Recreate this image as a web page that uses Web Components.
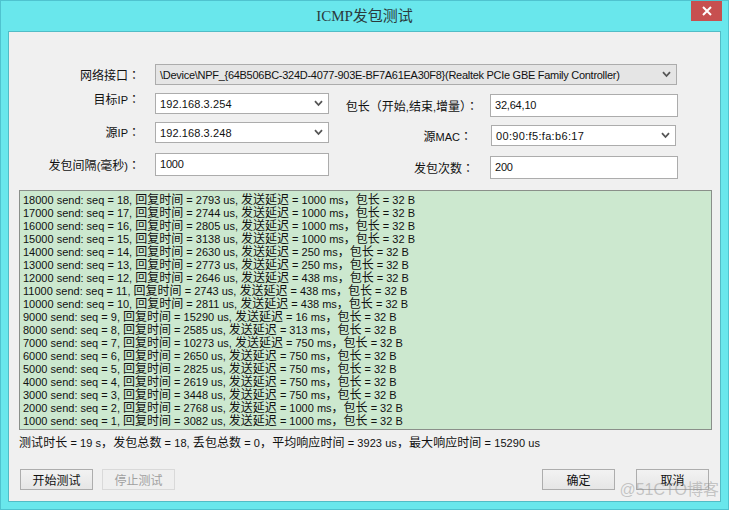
<!DOCTYPE html>
<html><head><meta charset="utf-8"><style>html,body{margin:0;padding:0;background:#69e7ec}</style></head><body>
<icmp-window>
  <icmp-form></icmp-form>
  <icmp-log></icmp-log>
  <icmp-summary></icmp-summary>
  <icmp-actions></icmp-actions>
</icmp-window>
<script>
const FONT = '"Liberation Sans","Noto Sans CJK SC",sans-serif';
const CJK_CSS = `.c{font-family:"Noto Sans CJK SC",sans-serif;font-size:12px}.k{font-family:"Noto Sans CJK TC",sans-serif;font-size:12px}`;
const wrap = s => s.replace(/[\u3000-\u9fff\uff00-\uffef]+/g, m => `<span class="c">${m}</span>`);
const wrapLabel = s => wrap(s.replace(/：$/,'')) + (s.endsWith('：') ? '<span class="k">：</span>' : '');

class IcmpWindow extends HTMLElement{
  constructor(){super();this.attachShadow({mode:'open'}).innerHTML=`<style>
  :host{display:flex;flex-direction:column;width:729px;height:510px;box-sizing:border-box;background:#69e7ec;border:1px solid #4fc3cf;font-family:${FONT};position:relative;overflow:hidden}
  .bar{height:30px;flex:none;display:flex;justify-content:center;align-items:center;font:15px "Liberation Serif","Noto Sans CJK SC",serif;color:#2b3a3c;padding-bottom:4px;box-sizing:border-box}
  .close{position:absolute;top:0;right:6px;width:31px;height:20px;background:#c75050;display:flex;align-items:center;justify-content:center}
  .client{flex:1;margin:0 7px 7px 7px;background:#f0f0f0;border:1px solid #52bcc6;display:flex;flex-direction:column;padding:32px 9px 0 10px;box-sizing:border-box;min-height:0}
  .mark{position:absolute;right:9px;bottom:9px;font:16px "Liberation Sans","Noto Sans CJK SC",sans-serif;color:rgba(140,140,140,.45)}
  </style>
  <div class="bar">ICMP发包测试</div>
  <div class="close"><svg width="10" height="10" viewBox="0 0 10 10"><path d="M1 1L9 9M9 1L1 9" stroke="#fff" stroke-width="2"/></svg></div>
  <div class="client"><slot></slot></div>
  <div class="mark">@51CTO博客</div>`;}
}
class IcmpField extends HTMLElement{
  constructor(){super();const w=this.getAttribute('lw'),g=this.getAttribute('gap'),up=this.getAttribute('up')||0,cw=this.getAttribute('cw'),h=this.getAttribute('h');
  this.attachShadow({mode:'open'}).innerHTML=`<style>
  :host{display:flex;align-items:center;height:${h}px;color:#111;font-size:11px}
  label{width:${w}px;margin-right:${g}px;text-align:right;white-space:nowrap;flex:none;padding-bottom:${up}px;box-sizing:border-box;display:flex;justify-content:flex-end;align-items:baseline;white-space:pre}
  .ctl{width:${cw}px;flex:none;display:flex}
  ${CJK_CSS}
  </style><label><span>${wrapLabel(this.getAttribute('label'))}</span></label><div class="ctl"><slot></slot></div>`;}
}
class IcmpSelect extends HTMLElement{
  constructor(){super();const d=this.hasAttribute('disabled');
  this.attachShadow({mode:'open'}).innerHTML=`<style>
  :host{display:flex;flex:1;align-items:center;justify-content:space-between;height:21px;box-sizing:border-box;border:1px solid #acacac;background:${d?'#e5e5e5':'#fff'};padding:0 5px 0 4px;font-size:11px;color:#111;white-space:nowrap;letter-spacing:${this.getAttribute('ls')||0}px}
  svg{flex:none}
  </style><span><slot></slot></span><svg width="9" height="7" viewBox="0 0 9 7"><path d="M1 1.2L4.5 5L8 1.2" fill="none" stroke="#555" stroke-width="1.8"/></svg>`;}
}
class IcmpInput extends HTMLElement{
  constructor(){super();this.attachShadow({mode:'open'}).innerHTML=`<style>
  :host{display:flex;flex:1;align-items:center;height:23px;box-sizing:border-box;border:1px solid #acacac;background:#fff;padding:0 0 2px 4px;font-size:11px;color:#111;letter-spacing:-.2px}
  </style><slot></slot>`;}
}
class IcmpButton extends HTMLElement{
  constructor(){super();const d=this.hasAttribute('disabled');
  this.attachShadow({mode:'open'}).innerHTML=`<style>
  :host{display:flex;align-items:center;justify-content:center;width:73px;height:21px;box-sizing:border-box;border:1px solid ${d?'#d9d9d9':'#adadad'};background:${d?'#efefef':'linear-gradient(#f2f2f2,#e6e6e6)'};color:${d?'#a0a0a0':'#111'};font:12px "Noto Sans CJK SC",sans-serif}
  </style><slot></slot>`;}
}
class IcmpForm extends HTMLElement{
  constructor(){super();this.attachShadow({mode:'open'}).innerHTML=`<style>
  :host{display:flex;flex-direction:column;flex:none;height:126px}
  .cols{display:flex;margin-top:8px}
  .col{display:flex;flex-direction:column}
  .l{width:320px}
  .l icmp-field:nth-child(2){margin-top:8px}
  .l icmp-field:nth-child(3){margin-top:10px}
  .r{margin-top:1px}
  .r icmp-field:nth-child(2){margin-top:8px}
  .r icmp-field:nth-child(3){margin-top:10px}
  </style>
  <icmp-field label="网络接口：" h="21" lw="121" gap="15" cw="522"><icmp-select disabled ls="-.28">\\Device\\NPF_{64B506BC-324D-4077-903E-BF7A61EA30F8}(Realtek PCIe GBE Family Controller)</icmp-select></icmp-field>
  <div class="cols">
    <div class="col l">
      <icmp-field label="目标IP：" h="21" lw="121" gap="15" up="10" cw="174"><icmp-select ls=".1">192.168.3.254</icmp-select></icmp-field>
      <icmp-field label="源IP：" h="21" lw="121" gap="15" up="2" cw="174"><icmp-select ls=".1">192.168.3.248</icmp-select></icmp-field>
      <icmp-field label="发包间隔(毫秒)：" h="23" lw="121" gap="15" cw="174"><icmp-input>1000</icmp-input></icmp-field>
    </div>
    <div class="col r">
      <icmp-field label="包长（开始,结束,增量）：" h="23" lw="139" gap="12" cw="188"><icmp-input>32,64,10</icmp-input></icmp-field>
      <icmp-field label="源MAC：" h="21" lw="133" gap="19" cw="185"><icmp-select ls=".33">00:90:f5:fa:b6:17</icmp-select></icmp-field>
      <icmp-field label="发包次数：" h="23" lw="135" gap="16" cw="188"><icmp-input>200</icmp-input></icmp-field>
    </div>
  </div>`;}
}
const ROWS=[[18,2793,1000],[17,2744,1000],[16,2805,1000],[15,3138,1000],[14,2630,250],[13,2773,250],[12,2646,438],[11,2743,438],[10,2811,438],[9,15290,16],[8,2585,313],[7,10273,750],[6,2650,750],[5,2825,750],[4,2619,750],[3,3448,750],[2,2768,1000],[1,3082,1000]];
class IcmpLog extends HTMLElement{
  constructor(){super();this.attachShadow({mode:'open'}).innerHTML=`<style>
  :host{display:block;flex:none;height:240px;box-sizing:border-box;width:693px;border:1px solid #8a8f8a;background:#cce8cf;padding:1px 3px 0;font-size:11px;color:#111;overflow:hidden}
  div{height:13px;line-height:13px;white-space:nowrap}
  ${CJK_CSS}
  .c{display:inline-block;line-height:13px}
  </style>`+ROWS.map(([s,t,d])=>`<div>${wrap(`${s*1000} send: seq = ${s}, 回复时间 = ${t} us, 发送延迟 = ${d} ms，包长 = 32 B`)}</div>`).join('');}
}
class IcmpSummary extends HTMLElement{
  constructor(){super();this.attachShadow({mode:'open'}).innerHTML=`<style>
  :host{display:block;flex:none;margin-top:4px;height:16px;line-height:16px;font-size:11px;letter-spacing:.07px;color:#111;white-space:nowrap}
  ${CJK_CSS}
  </style>`+wrap('测试时长 = 19 s，发包总数 = 18, 丢包总数 = 0，平均响应时间 = 3923 us，最大响应时间 = 15290 us');}
}
class IcmpActions extends HTMLElement{
  constructor(){super();this.attachShadow({mode:'open'}).innerHTML=`<style>
  :host{display:flex;flex:none;margin-top:19px;padding:0 2px 0 1px}
  .sp{flex:1}
  .g{width:9px}
  .g2{width:21px}
  </style>
  <icmp-button>开始测试</icmp-button><div class="g"></div><icmp-button disabled>停止测试</icmp-button>
  <div class="sp"></div>
  <icmp-button>确定</icmp-button><div class="g2"></div><icmp-button>取消</icmp-button>`;}
}
customElements.define('icmp-field',IcmpField);
customElements.define('icmp-select',IcmpSelect);
customElements.define('icmp-input',IcmpInput);
customElements.define('icmp-button',IcmpButton);
customElements.define('icmp-form',IcmpForm);
customElements.define('icmp-log',IcmpLog);
customElements.define('icmp-summary',IcmpSummary);
customElements.define('icmp-actions',IcmpActions);
customElements.define('icmp-window',IcmpWindow);
</script>
</body></html>
